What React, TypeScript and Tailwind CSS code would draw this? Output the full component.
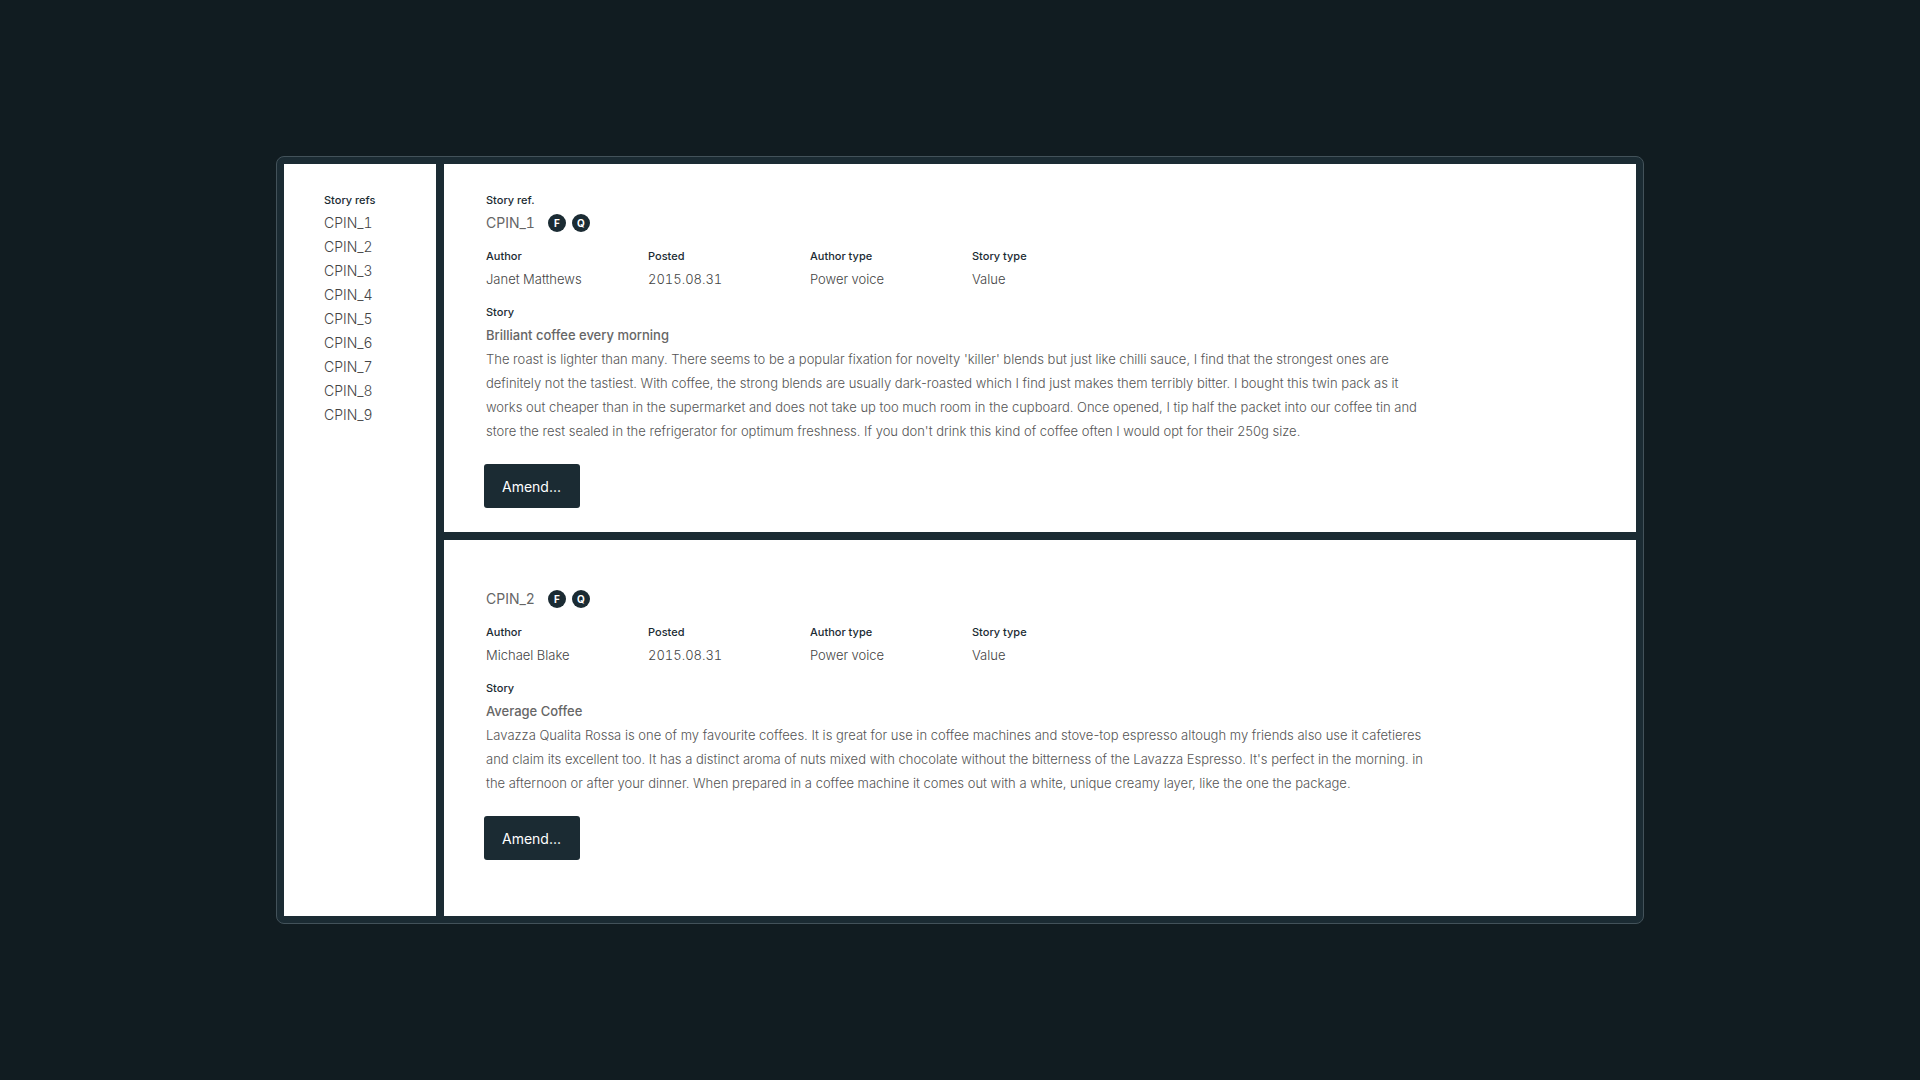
type Story = {
  ref: string;
  author: string;
  posted: string;
  authorType: string;
  storyType: string;
  title: string;
  lines: string[];
};

const REFS = ["CPIN_1", "CPIN_2", "CPIN_3", "CPIN_4", "CPIN_5", "CPIN_6", "CPIN_7", "CPIN_8", "CPIN_9"];

const STORIES: Story[] = [
  {
    ref: "CPIN_1",
    author: "Janet Matthews",
    posted: "2015.08.31",
    authorType: "Power voice",
    storyType: "Value",
    title: "Brilliant coffee every morning",
    lines: [
      "The roast is lighter than many. There seems to be a popular fixation for novelty 'killer' blends but just like chilli sauce, I find that the strongest ones are",
      "definitely not the tastiest. With coffee, the strong blends are usually dark-roasted which I find just makes them terribly bitter. I bought this twin pack as it",
      "works out cheaper than in the supermarket and does not take up too much room in the cupboard. Once opened, I tip half the packet into our coffee tin and",
      "store the rest sealed in the refrigerator for optimum freshness. If you don't drink this kind of coffee often I would opt for their 250g size.",
    ],
  },
  {
    ref: "CPIN_2",
    author: "Michael Blake",
    posted: "2015.08.31",
    authorType: "Power voice",
    storyType: "Value",
    title: "Average Coffee",
    lines: [
      "Lavazza Qualita Rossa is one of my favourite coffees. It is great for use in coffee machines and stove-top espresso altough my friends also use it cafetieres",
      "and claim its excellent too. It has a distinct aroma of nuts mixed with chocolate without the bitterness of the Lavazza Espresso. It's perfect in the morning. in",
      "the afternoon or after your dinner. When prepared in a coffee machine it comes out with a white, unique creamy layer, like the one the package.",
    ],
  },
];

function Badge({ letter }: { letter: string }) {
  return (
    <span className="flex size-[18px] items-center justify-center rounded-full bg-[#1b2b33] text-[10px] leading-none font-bold text-white">
      {letter}
    </span>
  );
}

function Field({ label, value }: { label: string; value: string }) {
  return (
    <div>
      <dt className="text-[11px] leading-[22px] font-medium text-[#1b2b33]">{label}</dt>
      <dd className="text-[13px] leading-6 font-light text-[#444] tabular-nums">{value}</dd>
    </div>
  );
}

function StoryPanel({ story, first }: { story: Story; first: boolean }) {
  return (
    <article className={`bg-white px-[42px] pt-[25px] ${first ? "pb-6" : "grow pb-14"}`}>
      {/* only the first panel carries the column heading */}
      <div className="h-[22px] text-[11px] leading-[22px] font-medium text-[#1b2b33]">{first && "Story ref."}</div>
      <div className="flex h-6 items-center">
        <h2 className="w-[62px] text-sm leading-6 text-[#666] tabular-nums">{story.ref}</h2>
        <div className="flex gap-1.5">
          <Badge letter="F" />
          <Badge letter="Q" />
        </div>
      </div>

      <dl className="mt-2.5 grid max-w-[648px] grid-cols-4">
        <Field label="Author" value={story.author} />
        <Field label="Posted" value={story.posted} />
        <Field label="Author type" value={story.authorType} />
        <Field label="Story type" value={story.storyType} />
      </dl>

      <div className="mt-2.5 text-[11px] leading-[22px] font-medium text-[#1b2b33]">Story</div>
      <h3 className="text-[13px] leading-6 font-medium text-[#666]">{story.title}</h3>
      <p className="text-[13px] leading-6 font-light text-[#555]">
        {story.lines.map((line) => (
          <span key={line} className="block">
            {line}
          </span>
        ))}
      </p>

      <button className="mt-[21px] -ml-0.5 h-11 w-24 rounded-[3px] bg-[#1b2b33] px-[18px] pt-0.5 text-left text-sm text-white">
        Amend...
      </button>
    </article>
  );
}

function App() {
  return (
    <div className="flex min-h-screen items-center justify-center bg-[#111c21] p-6 font-[Inter,Arial,sans-serif]">
      <div className="flex w-full max-w-[1368px] gap-2 rounded-lg border border-[#43525a] bg-[#1b2b33] p-[7px]">
        <nav className="w-[152px] shrink-0 bg-white px-10 pt-[25px]">
          <h1 className="text-[11px] leading-[22px] font-medium text-[#1b2b33]">Story refs</h1>
          <ul>
            {REFS.map((ref) => (
              <li key={ref} className="text-sm leading-6 font-light text-[#444] tabular-nums">
                <a href={`#${ref}`}>{ref}</a>
              </li>
            ))}
          </ul>
        </nav>

        <main className="flex min-w-0 grow flex-col gap-2">
          {STORIES.map((story, i) => (
            <StoryPanel key={story.ref} story={story} first={i === 0} />
          ))}
        </main>
      </div>
    </div>
  );
}

export default App;
